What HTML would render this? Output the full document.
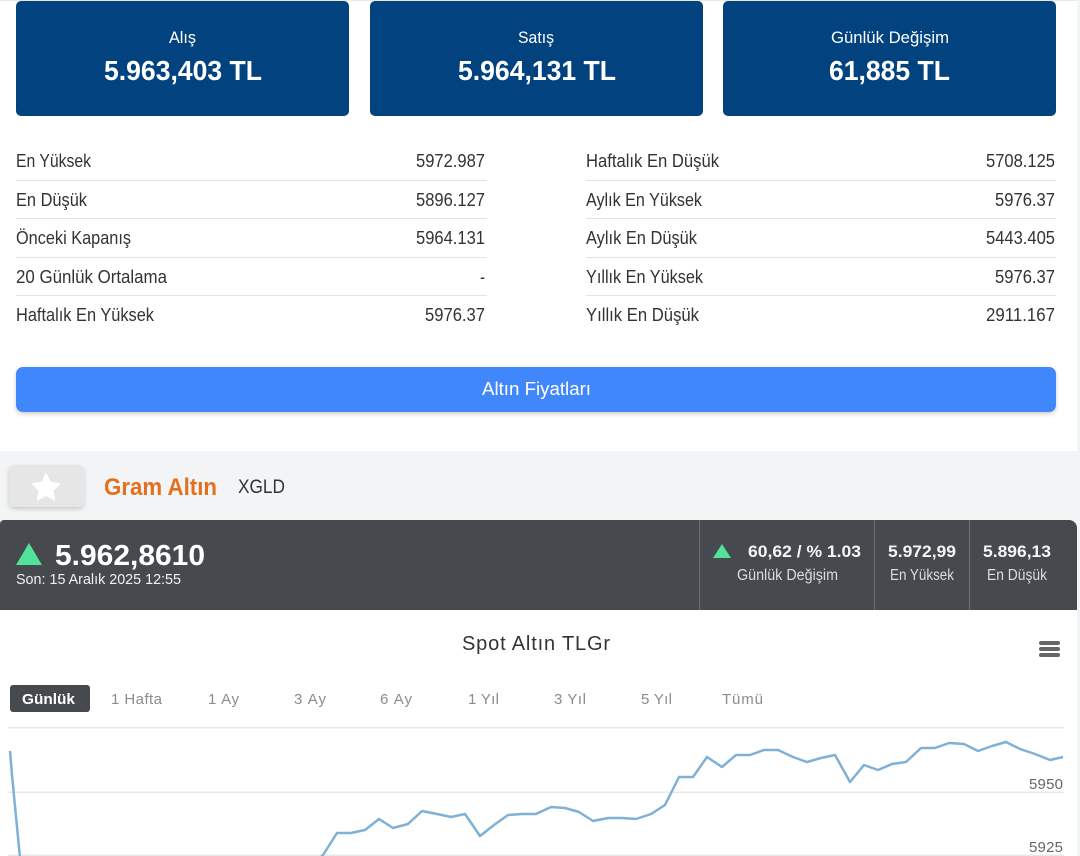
<!DOCTYPE html>
<html lang="tr"><head><meta charset="utf-8"><title>Gram Altın</title>
<style>
html,body{margin:0;padding:0;background:#f2f4f6;width:1080px;height:856px;overflow:hidden}
svg{display:block}
text{font-family:"Liberation Sans",sans-serif}
.b{font-weight:700}
</style></head><body>
<svg width="1080" height="856" viewBox="0 0 1080 856" xmlns="http://www.w3.org/2000/svg">
<defs>
<filter id="s1" x="-5%" y="-30%" width="110%" height="170%"><feDropShadow dx="0" dy="2" stdDeviation="2.5" flood-color="#000" flood-opacity=".2"/></filter>
<filter id="s2" x="-20%" y="-30%" width="140%" height="170%"><feDropShadow dx="0" dy="2" stdDeviation="2" flood-color="#000" flood-opacity=".18"/></filter>
</defs>
<rect width="1080" height="856" fill="#f2f4f6"/>
<rect x="0" y="0" width="1077" height="451" fill="#fff"/>
<rect x="0" y="0" width="1077" height="1" fill="#e8e8e8"/>

<g fill="#02437f">
<rect x="16" y="1" width="333" height="115" rx="5"/>
<rect x="370" y="1" width="333" height="115" rx="5"/>
<rect x="723" y="1" width="333" height="115" rx="5"/>
</g>
<g fill="#fff" font-size="17">
<text x="169" y="43" textLength="27" lengthAdjust="spacingAndGlyphs">Alış</text>
<text x="518" y="43" textLength="36" lengthAdjust="spacingAndGlyphs">Satış</text>
<text x="831" y="43" textLength="118" lengthAdjust="spacingAndGlyphs">Günlük Değişim</text>
</g>
<g fill="#fff" font-size="28" class="b">
<text x="104" y="80" textLength="158" lengthAdjust="spacingAndGlyphs">5.963,403 TL</text>
<text x="458" y="80" textLength="158" lengthAdjust="spacingAndGlyphs">5.964,131 TL</text>
<text x="829" y="80" textLength="121" lengthAdjust="spacingAndGlyphs">61,885 TL</text>
</g>

<g fill="#e3e3e3">
<rect x="16" y="180" width="471" height="1"/><rect x="16" y="218" width="471" height="1"/><rect x="16" y="257" width="471" height="1"/><rect x="16" y="295" width="471" height="1"/>
<rect x="586" y="180" width="470" height="1"/><rect x="586" y="218" width="470" height="1"/><rect x="586" y="257" width="470" height="1"/><rect x="586" y="295" width="470" height="1"/>
</g>
<g fill="#333" font-size="18">
<text x="16" y="167" textLength="75" lengthAdjust="spacingAndGlyphs">En Yüksek</text>
<text x="16" y="206" textLength="71" lengthAdjust="spacingAndGlyphs">En Düşük</text>
<text x="16" y="244" textLength="115" lengthAdjust="spacingAndGlyphs">Önceki Kapanış</text>
<text x="16" y="283" textLength="151" lengthAdjust="spacingAndGlyphs">20 Günlük Ortalama</text>
<text x="16" y="321" textLength="138" lengthAdjust="spacingAndGlyphs">Haftalık En Yüksek</text>
<text x="416" y="167" textLength="69" lengthAdjust="spacingAndGlyphs">5972.987</text>
<text x="416" y="206" textLength="69" lengthAdjust="spacingAndGlyphs">5896.127</text>
<text x="416" y="244" textLength="69" lengthAdjust="spacingAndGlyphs">5964.131</text>
<text x="480" y="283" textLength="5" lengthAdjust="spacingAndGlyphs">-</text>
<text x="425" y="321" textLength="60" lengthAdjust="spacingAndGlyphs">5976.37</text>
<text x="586" y="167" textLength="133" lengthAdjust="spacingAndGlyphs">Haftalık En Düşük</text>
<text x="586" y="206" textLength="116" lengthAdjust="spacingAndGlyphs">Aylık En Yüksek</text>
<text x="586" y="244" textLength="111" lengthAdjust="spacingAndGlyphs">Aylık En Düşük</text>
<text x="586" y="283" textLength="117" lengthAdjust="spacingAndGlyphs">Yıllık En Yüksek</text>
<text x="586" y="321" textLength="113" lengthAdjust="spacingAndGlyphs">Yıllık En Düşük</text>
<text x="986" y="167" textLength="69" lengthAdjust="spacingAndGlyphs">5708.125</text>
<text x="995" y="206" textLength="60" lengthAdjust="spacingAndGlyphs">5976.37</text>
<text x="986" y="244" textLength="69" lengthAdjust="spacingAndGlyphs">5443.405</text>
<text x="995" y="283" textLength="60" lengthAdjust="spacingAndGlyphs">5976.37</text>
<text x="986" y="321" textLength="69" lengthAdjust="spacingAndGlyphs">2911.167</text>
</g>

<rect x="16" y="367" width="1040" height="45" rx="7" fill="#3f87fb" filter="url(#s1)"/>
<text x="482" y="395" fill="#fff" font-size="18.5" textLength="109" lengthAdjust="spacingAndGlyphs">Altın Fiyatları</text>

<rect x="9" y="465" width="75" height="42" rx="6" fill="#e6e6e6" filter="url(#s2)"/>
<path d="M46 473.5l4.3 8.8 9.7 1.3-7 6.8 1.7 9.6-8.7-4.6-8.7 4.6 1.7-9.6-7-6.8 9.7-1.3z" fill="#fff" stroke="#fff" stroke-width="1" stroke-linejoin="round"/>
<text x="104" y="495" class="b" fill="#e4701f" font-size="24" textLength="113" lengthAdjust="spacingAndGlyphs">Gram Altın</text>
<text x="238" y="493" fill="#333" font-size="19" textLength="47" lengthAdjust="spacingAndGlyphs">XGLD</text>

<rect x="0" y="610" width="1077" height="246" fill="#fff"/>
<path d="M0 524a4 4 0 0 1 4-4H1069a8 8 0 0 1 8 8V610H0z" fill="#464a4f"/>
<path d="M16 565L29 543L42 565z" fill="#52e39b"/>
<text x="55" y="565" class="b" fill="#fff" font-size="29" textLength="150" lengthAdjust="spacingAndGlyphs">5.962,8610</text>
<text x="16" y="584" fill="#f0f0f0" font-size="15" textLength="165" lengthAdjust="spacingAndGlyphs">Son: 15 Aralık 2025 12:55</text>
<g fill="#6c6f74"><rect x="699" y="520" width="1" height="90"/><rect x="874" y="520" width="1" height="90"/><rect x="969" y="520" width="1" height="90"/></g>
<path d="M713 558L722 544L731 558z" fill="#52e39b"/>
<g class="b" fill="#f5f5f5" font-size="17">
<text x="748" y="557" textLength="113" lengthAdjust="spacingAndGlyphs">60,62 / % 1.03</text>
<text x="888" y="557" textLength="68" lengthAdjust="spacingAndGlyphs">5.972,99</text>
<text x="983" y="557" textLength="68" lengthAdjust="spacingAndGlyphs">5.896,13</text>
</g>
<g fill="#dcdcdc" font-size="15.5">
<text x="737" y="580" textLength="101" lengthAdjust="spacingAndGlyphs">Günlük Değişim</text>
<text x="890" y="580" textLength="64" lengthAdjust="spacingAndGlyphs">En Yüksek</text>
<text x="987" y="580" textLength="60" lengthAdjust="spacingAndGlyphs">En Düşük</text>
</g>

<text x="462" y="650" fill="#333" font-size="20" textLength="148" lengthAdjust="spacing">Spot Altın TLGr</text>
<g fill="#666"><rect x="1039" y="641" width="21" height="4" rx="2"/><rect x="1039" y="647" width="21" height="4" rx="2"/><rect x="1039" y="653" width="21" height="4" rx="2"/></g>

<rect x="10" y="685" width="80" height="27" rx="3" fill="#464a4f"/>
<text x="22" y="704" class="b" fill="#fff" font-size="15" textLength="53" lengthAdjust="spacingAndGlyphs">Günlük</text>
<g fill="#8c8c8c" font-size="15">
<text x="111" y="704" textLength="51" lengthAdjust="spacing">1 Hafta</text>
<text x="208" y="704" textLength="31" lengthAdjust="spacing">1 Ay</text>
<text x="294" y="704" textLength="32" lengthAdjust="spacing">3 Ay</text>
<text x="380" y="704" textLength="32" lengthAdjust="spacing">6 Ay</text>
<text x="468" y="704" textLength="31" lengthAdjust="spacing">1 Yıl</text>
<text x="554" y="704" textLength="32" lengthAdjust="spacing">3 Yıl</text>
<text x="641" y="704" textLength="31" lengthAdjust="spacing">5 Yıl</text>
<text x="722" y="704" textLength="41" lengthAdjust="spacing">Tümü</text>
</g>

<g fill="#e8e8e8"><rect x="8" y="727" width="1056" height="1.5"/><rect x="8" y="791.5" width="1056" height="1.5"/><rect x="8" y="854.5" width="1056" height="1.5"/></g>
<path fill="none" stroke="#7fb1d6" stroke-width="2.5" stroke-linejoin="round" d="M10 751L12 775L20 858M320 858L323 855L337 833L351 833L365 830L379 819L393 828L408 824L422 811L437 814L451 817L465 814L480 836L494 825L508 815L522 814L536 814L551 807L565 808L579 812L593 821L608 818L622 818L636 819L651 814L665 805L679 777L693 777L707 757L722 767L736 755L750 755L764 750L778 750L793 757L807 762L821 758L835 755L850 782L864 765L878 770L892 764L906 762L921 748L935 748L949 743L964 744L978 751L992 746L1006 742L1020 749L1035 754L1050 760L1063 757"/>
<g fill="#666" font-size="15">
<text x="1029" y="789" textLength="34" lengthAdjust="spacing">5950</text>
<text x="1029" y="852" textLength="34" lengthAdjust="spacing">5925</text>
</g>
</svg>
</body></html>
